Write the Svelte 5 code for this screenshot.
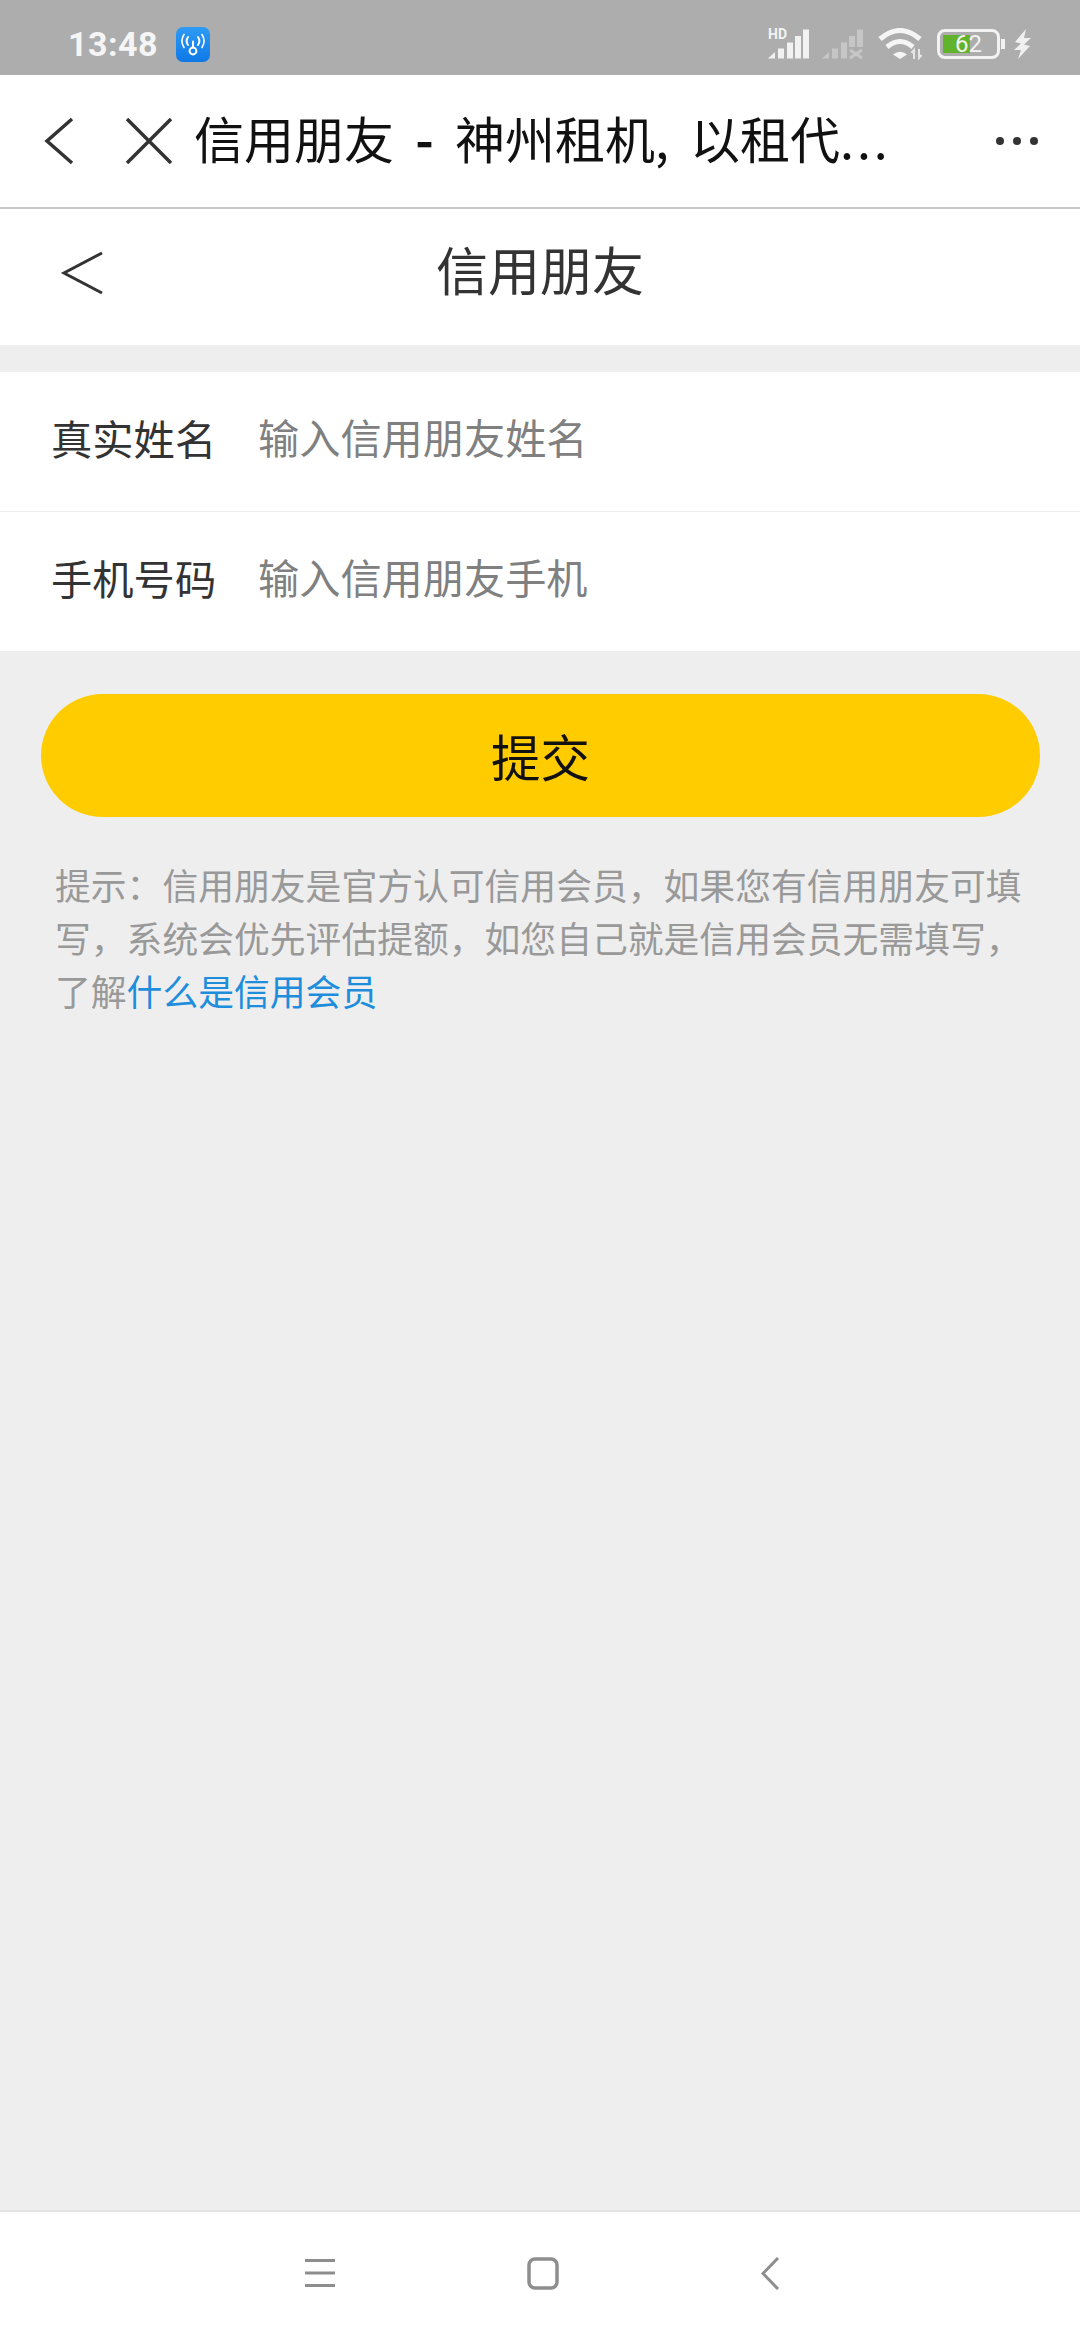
<script>
  let name = $state('');
  let phone = $state('');
</script>

<div class="page">
  <div class="status">
    <div class="status-left">
      <span class="time">13:48</span>
      <svg class="app-icon" width="34" height="35" viewBox="0 0 34 35">
        <defs>
          <linearGradient id="appBg" x1="0" y1="0" x2="0" y2="1">
            <stop offset="0" stop-color="#2f9cf5" />
            <stop offset="1" stop-color="#0f78e6" />
          </linearGradient>
        </defs>
        <rect width="34" height="35" rx="7" fill="url(#appBg)" />
        <g fill="none" stroke="#fff" stroke-width="2" stroke-linecap="round">
          <circle cx="17" cy="24" r="3.4" />
          <path d="M17 20.5v-6" />
          <path d="M12 10a7 7 0 0 0 0 8M22 10a7 7 0 0 1 0 8" />
          <path d="M8 7.5a12 12 0 0 0 0 13M26 7.5a12 12 0 0 1 0 13" stroke-width="1.6" />
        </g>
      </svg>
    </div>
    <div class="status-right">
      <svg width="42" height="30" viewBox="0 0 42 30" class="sig">
        <text x="0" y="10" class="hd">HD</text>
        <path d="M0 29.5L7 23v6.5zM10 29.5V19.5h6v10zM19 29.5V13.5h6v16zM27 29.5V7h6v22.5zM35 29.5V0.5h6v29z" fill="#f2f2f2" />
      </svg>
      <svg width="42" height="30" viewBox="0 0 42 30" class="sig2">
        <path d="M0 29.5L7 23v6.5zM10 29.5V19.5h6v10zM19 29.5V13.5h6v16zM27 18V7h6v11zM35 18V0.5h6v17.5z" fill="#c6c6c6" />
        <path d="M28 21l12 8M40 21l-12 8" stroke="#c6c6c6" stroke-width="3" fill="none" />
      </svg>
      <svg width="47" height="32" viewBox="0 0 47 32" class="wifi">
        <g fill="none" stroke="#f5f5f5" stroke-width="5">
          <path d="M2 11Q22 -6 42 11" />
          <path d="M9 19Q22 8 35 19" />
        </g>
        <path d="M15 26.5Q22 21 29 26.5L22 31z" fill="#f5f5f5" />
        <path d="M36 31v-9l-2.5 3M41 21v9l2.5-3" stroke="#e6e6e6" stroke-width="2" fill="none" />
      </svg>
      <div class="battery">
        <div class="cell">
          <div class="fill"></div>
          <span class="level">62</span>
        </div>
        <div class="nub"></div>
      </div>
      <svg width="18" height="30" viewBox="0 0 18 30" class="bolt">
        <path d="M13 0L2 13l6 1.500-7 6.500 7 0-3 9 12-13-6-1.500 7-6.500-7 0z" fill="#f0f0f0" />
      </svg>
    </div>
  </div>

  <div class="nav">
    <svg class="nav-back" width="30" height="48" viewBox="0 0 30 48">
      <path d="M28 2L3 24l25 22" fill="none" stroke="#333" stroke-width="3.5" />
    </svg>
    <svg class="nav-close" width="48" height="46" viewBox="0 0 48 46">
      <path d="M2 1l44 44M46 1L2 45" fill="none" stroke="#333" stroke-width="3.5" />
    </svg>
    <div class="nav-title">信用朋友 <b>-</b> 神州租机, 以租代<span class="dots">...</span></div>
    <div class="more"><i></i><i></i><i></i></div>
  </div>

  <div class="header">
    <svg class="head-back" width="44" height="44" viewBox="0 0 44 44">
      <path d="M42 2L4 22l38 20" fill="none" stroke="#333" stroke-width="3" />
    </svg>
    <div class="head-title">信用朋友</div>
  </div>

  <div class="form">
    <label class="row">
      <span class="label">真实姓名</span>
      <input type="text" bind:value={name} placeholder="输入信用朋友姓名" />
    </label>
    <label class="row">
      <span class="label">手机号码</span>
      <input type="text" bind:value={phone} placeholder="输入信用朋友手机" />
    </label>
  </div>

  <button class="submit">提交</button>

  <p class="hint">提示：信用朋友是官方认可信用会员，如果您有信用朋友可填写，系统会优先评估提额，如您自己就是信用会员无需填写，了解<a href="#member">什么是信用会员</a></p>

  <div class="tabbar">
    <svg width="32" height="30" viewBox="0 0 32 30">
      <path d="M1 2.500h30M1 15h30M1 27.500h30" stroke="#8e8e8e" stroke-width="3" fill="none" />
    </svg>
    <svg width="32" height="33" viewBox="0 0 32 33">
      <rect x="2" y="2" width="28" height="29" rx="6" fill="none" stroke="#8e8e8e" stroke-width="3.5" />
    </svg>
    <svg class="tab-back" width="20" height="33" viewBox="0 0 20 33">
      <path d="M17 1L2 16.500l15 15.500" fill="none" stroke="#8e8e8e" stroke-width="3" />
    </svg>
  </div>
</div>

<style>
  :global(body) {
    margin: 0;
    background: #eeeeee;
  }
  .page {
    width: 1080px;
    height: 2340px;
    display: flex;
    flex-direction: column;
    background: #eeeeee;
    font-family: "Noto Sans CJK SC", "Liberation Sans", sans-serif;
    overflow: hidden;
  }
  .status {
    height: 75px;
    flex: none;
    background: #adadad;
    display: flex;
    align-items: center;
    justify-content: space-between;
    padding: 13px 49px 0 68px;
    box-sizing: border-box;
  }
  .status-left {
    display: flex;
    align-items: center;
    gap: 18px;
  }
  .time {
    font-family: Roboto, sans-serif;
    font-size: 34px;
    font-weight: 700;
    letter-spacing: 0.5px;
    color: #f5f5f5;
  }
  .status-right {
    display: flex;
    align-items: center;
    gap: 12px;
  }
  .sig {
    overflow: visible;
  }
  .hd {
    font-family: Roboto, sans-serif;
    font-size: 14px;
    font-weight: 700;
    fill: #f2f2f2;
  }
  .wifi {
    margin-left: 2px;
  }
  .bolt {
    margin-left: -4px;
  }
  .battery {
    display: flex;
    align-items: center;
    gap: 1px;
  }
  .cell {
    position: relative;
    width: 63px;
    height: 30px;
    box-sizing: border-box;
    border: 3px solid #f2f2f2;
    border-radius: 8px;
    padding: 3px;
  }
  .fill {
    width: 53%;
    height: 100%;
    background: #62b32c;
  }
  .level {
    position: absolute;
    left: 15px;
    top: 50%;
    transform: translateY(-50%);
    font-family: Roboto, sans-serif;
    font-size: 24px;
    line-height: 24px;
    color: #f2f2f2;
  }
  .nub {
    width: 4px;
    height: 10px;
    background: #f2f2f2;
  }
  .nav {
    height: 132px;
    flex: none;
    background: #fff;
    border-bottom: 2px solid #c9c9c9;
    display: flex;
    align-items: center;
    padding-left: 44px;
  }
  .nav-close {
    margin-left: 51px;
  }
  .nav-title {
    margin-left: 21px;
    padding-bottom: 9px;
    flex: 1;
    font-size: 50px;
    word-spacing: 10px;
    color: #111;
    white-space: nowrap;
  }
  .nav-title b {
    font-weight: 700;
  }
  .dots {
    letter-spacing: 3px;
  }
  .more {
    display: flex;
    gap: 9px;
    margin-right: 42px;
  }
  .more i {
    width: 8px;
    height: 8px;
    border-radius: 50%;
    background: #333;
  }
  .header {
    position: relative;
    height: 136px;
    flex: none;
    background: #fff;
    display: flex;
    align-items: center;
    justify-content: center;
  }
  .head-back {
    position: absolute;
    left: 60px;
    top: 42px;
  }
  .head-title {
    font-size: 52px;
    padding-bottom: 17px;
    color: #333;
  }
  .form {
    margin-top: 27px;
    background: #fff;
    flex: none;
  }
  .row {
    height: 139px;
    display: flex;
    align-items: center;
    padding-left: 51px;
    border-bottom: 1px solid #eeeeee;
  }
  .label {
    width: 207px;
    font-size: 41.300px;
    padding-bottom: 10px;
    color: #333;
  }
  input {
    flex: 1;
    min-width: 0;
    border: 0;
    outline: 0;
    background: none;
    padding: 0 0 11px;
    font: inherit;
    font-size: 41.200px;
    color: #333;
  }
  input::placeholder {
    color: #808080;
    opacity: 1;
  }
  .submit {
    margin: 42px 40px 0 41px;
    height: 123px;
    flex: none;
    border: 0;
    border-radius: 62px;
    background: #ffcc00;
    color: #111;
    font: inherit;
    font-size: 49.500px;
  }
  .hint {
    margin: 41px 40px 0 55px;
    font-size: 35.800px;
    line-height: 53px;
    color: #999;
    flex: 1;
  }
  .hint a {
    color: #1d8ddc;
    text-decoration: none;
  }
  .tabbar {
    flex: none;
    background: #fff;
    border-top: 2px solid #e4e4e4;
    display: flex;
    align-items: center;
    padding: 0 0 6px 304px;
    height: 122px;
    gap: 191px;
  }
  .tab-back {
    margin-left: 11px;
  }
</style>
